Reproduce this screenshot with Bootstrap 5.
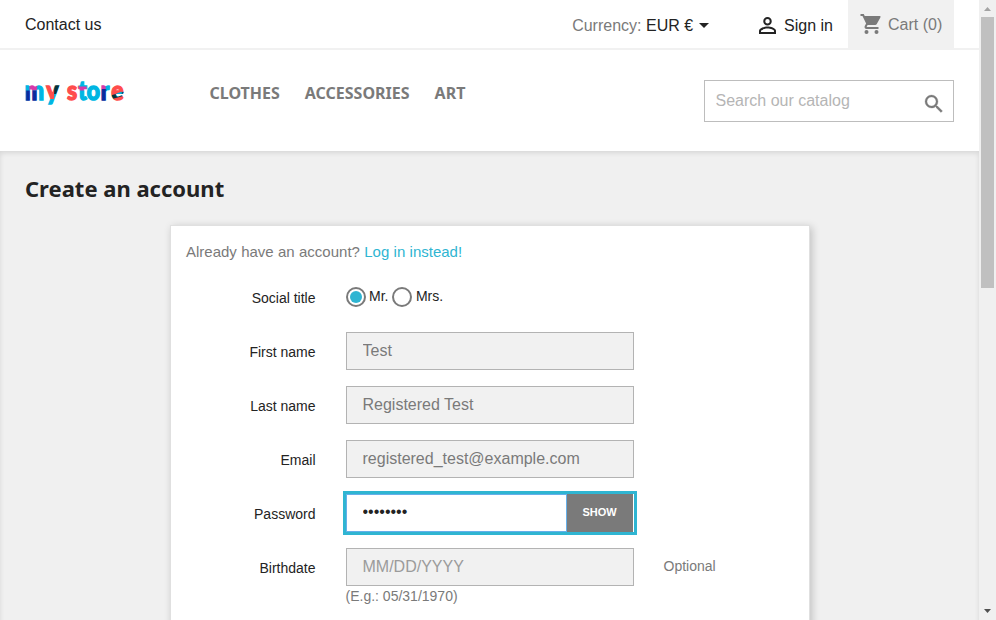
<!DOCTYPE html>
<html lang="en">
<head>
<meta charset="utf-8">
<meta name="viewport" content="width=device-width, initial-scale=1">
<title>Create an account</title>
<link href="https://cdn.jsdelivr.net/npm/bootstrap@5.3.0/dist/css/bootstrap.min.css" rel="stylesheet">
<style>
body{font-family:"Liberation Sans",Arial,sans-serif;font-size:16px;color:#232323;height:620px;overflow:hidden;line-height:24px}
a{color:inherit;text-decoration:none}
.page-pane{width:979px;height:620px;overflow:hidden}
.soft{color:#7a7a7a}
.top-strip{height:50px;border-bottom:2px solid #f1f1f1;padding:0 25px}
.contact{padding-top:2px}
.currency{margin-right:50px;padding-top:3px}
.caret{border:5px solid transparent;border-top-color:#232323;border-bottom:0;margin-left:6px}
.sign-in{gap:8px;margin-right:15px;padding-top:3px}
.cart-box{width:106px;height:48px;background:#f1f1f1;gap:5px;padding-left:12px}
.cart-box span{padding-top:1px}
.shop-head{height:101px;padding:30px 25px 0}
.logo-box{width:184.5px}
.logo-box svg{margin-top:-8px}
.main-menu{font:700 16px/24px "Noto Sans","Open Sans",sans-serif;gap:25px;padding-top:1px}
.search-box{width:250px;height:42px;border:1px solid #bdbdbd;padding:0 7px 0 10.5px}
.search-box input{width:200px;padding:0;border:0;outline:0;color:#7a7a7a}
.search-box input::placeholder{color:#b5b5b5;opacity:1}
.search-box svg{margin-top:5px}
.wrapper-area{height:600px;background:#f0f0f0;box-shadow:inset 0 2px 5px rgba(0,0,0,.11);padding:23px 25px}
h1{font:700 22px/28px "Noto Sans","Open Sans",sans-serif;margin:0 0 23px}
.form-panel{width:640px;margin-left:145px;height:500px;border:1px solid #e0e0e0;border-radius:0;box-shadow:2px 2px 8px rgba(0,0,0,.2);padding:14px 15px}
.intro{font-size:15px;margin-bottom:14px;word-spacing:.15px}
.accent{color:#2fb5d2}
.field-row{height:54px;font-size:14px}
.field-name{width:129.5px;margin-right:30px;line-height:40px}
.field-box{width:288px}
.field-box .form-control{height:38px;border:1px solid #b3b3b3;border-radius:0;background:#f1f1f1;color:#7a7a7a;padding:0 16px;font-size:16px}
.field-box .form-control::placeholder{color:#9b9b9b;opacity:1}
.field-box .hint{line-height:20px}
.secret{outline:3px solid #2fb5d2;height:38px;background:#fff}
.secret .form-control{background:#fff;color:#232323;border-color:#66afe9;padding-bottom:3px}
.show-btn{width:66px;border-radius:0;border:0;background:#7a7a7a;color:#fff;font-size:11px;font-weight:700;margin-right:1px;padding:0 0 2px}
.choices{height:20px;line-height:20px;padding-top:10px}
.choices span+span{margin-top:-1px}
.dial,.choices .dial{width:20px;height:20px;border:2px solid #7a7a7a;border-radius:50%;margin:-1px 3.500px 0 0;padding:2px}
.choices .dial+span{margin-top:-2px}
.dial i{display:block;width:12px;height:12px;border-radius:50%}
.dial-on i{background:#2fb5d2}
.choices .dial-next{margin-left:4px}
.optional{margin-left:30px;line-height:36px}
.scroll-track{width:17px;height:620px;background:#f0f0f0}
.scroll-thumb{width:13px;height:271px;background:#c0c0c0}
</style>
</head>
<body class="d-flex bg-white">
<div class="page-pane flex-shrink-0">
  <nav class="top-strip d-flex align-items-center bg-white">
    <a href="#" class="contact me-auto">Contact us</a>
    <div class="currency d-flex align-items-center"><span class="soft">Currency:&nbsp;</span><span>EUR €</span><span class="caret"></span></div>
    <a href="#" class="sign-in d-flex align-items-center">
      <svg width="17" height="17" viewBox="4 4 16 16" fill="#232323"><path d="M12 5.900a2.100 2.100 0 1 1 0 4.200 2.100 2.100 0 0 1 0-4.200m0 9c2.970 0 6.100 1.460 6.100 2.100v1.100H5.900V17c0-.64 3.130-2.100 6.100-2.100M12 4C9.790 4 8 5.790 8 8s1.790 4 4 4 4-1.790 4-4-1.790-4-4-4m0 9c-2.670 0-8 1.340-8 4v3h16v-3c0-2.660-5.330-4-8-4"/></svg>
      <span>Sign in</span></a>
    <div class="cart-box d-flex align-items-center soft">
      <svg width="23" height="24" viewBox="0.500 0 23 24" fill="#7a7a7a"><circle cx="7" cy="20" r="2"/><circle cx="17" cy="20" r="2"/><path d="M1 2v2h2l3.600 7.590-1.350 2.450C4.520 15.370 5.480 17 7 17h12v-2H7.420a.25.25 0 0 1-.22-.37L8.100 13h7.450c.75 0 1.410-.41 1.750-1.030l3.580-6.490A1 1 0 0 0 20 4H5.210l-.94-2z"/></svg>
      <span>Cart (0)</span></div>
  </nav>
  <header class="shop-head d-flex align-items-start bg-white">
    <a href="#" class="logo-box">
      <svg class="d-block" width="104" height="44" viewBox="-1 -8 104 44">
        <defs><pattern id="logoInk" patternUnits="userSpaceOnUse" x="-2" y="0" width="130" height="60" viewBox="-2 0 130 60">
          <rect x="-2" width="130" height="60" fill="#00b5e2"/>
          <rect x="4" y="5" width="8.500" height="5.500" fill="#d838a8"/><rect y="10.500" x="0" width="12.500" height="12" fill="#0c2a9c"/>
          <rect x="22" y="4" width="10" height="15" fill="#ff4c4c"/><rect x="32" y="4" width="8" height="10" fill="#04323a"/>
          <rect x="46" y="4" width="14" height="19" fill="#ff4c4c"/><rect x="60" y="6.500" width="9" height="4" fill="#d838a8"/>
          <rect x="84.500" y="4" width="6" height="5" fill="#d838a8"/><rect x="84.500" y="9" width="6.500" height="13" fill="#0c2a9c"/>
          <rect x="96" y="3" width="20" height="21" fill="#ff4c4c"/><path d="M96 15.500l20-5v4l-20 5z" fill="#04323a"/><path d="M103 13.500l6-2v3.500l-6 2z" fill="#00b5e2"/>
        </pattern></defs>
        <text transform="scale(.88 1)" x="-1.500 23 39 46.500 59.500 69 85 97" y="20" font-family="Lato,sans-serif" font-weight="900" font-size="26" fill="url(#logoInk)" stroke="url(#logoInk)" stroke-width="1.400">my store</text>
      </svg></a>
    <nav class="main-menu d-flex me-auto soft"><a href="#">CLOTHES</a><a href="#">ACCESSORIES</a><a href="#">ART</a></nav>
    <form class="search-box d-flex align-items-center justify-content-between">
      <input type="text" placeholder="Search our catalog" aria-label="Search our catalog">
      <svg width="24" height="24" viewBox="0 0 24 24" fill="#7a7a7a" stroke="#7a7a7a" stroke-width=".3"><path d="M15.500 14h-.79l-.28-.27A6.470 6.470 0 0 0 16 9.500 6.500 6.500 0 1 0 9.500 16c1.610 0 3.090-.59 4.230-1.570l.27.28v.79l5 4.990L20.490 19zm-6 0C7.010 14 5 11.990 5 9.500S7.010 5 9.500 5 14 7.010 14 9.500 11.990 14 9.500 14"/></svg>
    </form>
  </header>
  <main class="wrapper-area">
    <h1>Create an account</h1>
    <section class="form-panel card">
      <p class="intro soft">Already have an account? <a href="#" class="accent">Log in instead!</a></p>
      <div class="field-row d-flex"><label class="field-name text-end">Social title</label>
        <div class="choices d-flex"><span class="dial dial-on"><i></i></span><span>Mr.</span><span class="dial dial-next"><i></i></span><span>Mrs.</span></div></div>
      <div class="field-row d-flex"><label class="field-name text-end">First name</label><div class="field-box"><input class="form-control" value="Test"></div></div>
      <div class="field-row d-flex"><label class="field-name text-end">Last name</label><div class="field-box"><input class="form-control" value="Registered Test"></div></div>
      <div class="field-row d-flex"><label class="field-name text-end">Email</label><div class="field-box"><input class="form-control" value="registered_test@example.com"></div></div>
      <div class="field-row d-flex"><label class="field-name text-end">Password</label><div class="field-box"><div class="secret d-flex"><input type="password" class="form-control" value="password"><button type="button" class="show-btn flex-shrink-0">SHOW</button></div></div></div>
      <div class="field-row d-flex"><label class="field-name text-end">Birthdate</label><div class="field-box soft"><input class="form-control" placeholder="MM/DD/YYYY"><div class="hint">(E.g.: 05/31/1970)</div></div><span class="optional soft">Optional</span></div>
    </section>
  </main>
</div>
<div class="scroll-track d-flex flex-column align-items-center flex-shrink-0">
  <svg width="17" height="17" viewBox="0 0 17 17"><path d="M5 11h7L8.500 7z" fill="#a3a3a3"/></svg>
  <div class="scroll-thumb"></div>
  <svg class="mt-auto" width="17" height="17" viewBox="0 0 17 17"><path d="M5 6h7L8.500 10z" fill="#505050"/></svg>
</div>
<script src="https://cdn.jsdelivr.net/npm/bootstrap@5.3.0/dist/js/bootstrap.bundle.min.js"></script>
</body>
</html>
